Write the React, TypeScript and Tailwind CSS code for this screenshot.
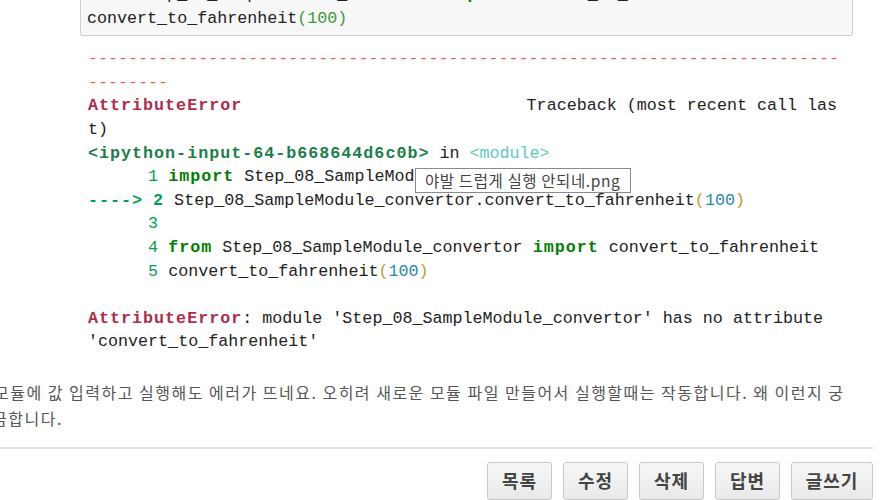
import React from "react";

const mono = "font-['Liberation_Mono','DejaVu_Sans_Mono',monospace] text-[16.7px] leading-[23.6px]";
const B = "font-bold tracking-[1px]";

export default function App() {
  return (
    <div className="w-[883px] h-[500px] overflow-hidden bg-white">
      {/* code cell */}
      <div
        className={`ml-[80px] w-[773px] -mt-[22px] pt-[4px] pb-[5px] px-[6px] border border-[#cfcfcf] rounded-[2px] bg-[#f7f7f7] text-[#222] whitespace-pre ${mono}`}
      >
        <div>
          <span className="text-[#008000] font-bold">from</span> Step_08_SampleModule_convertor{" "}
          <span className="text-[#008000] font-bold">import</span> convert_to_fahrenheit
        </div>
        <div>
          convert_to_fahrenheit<span className="text-[#3a9a3a]">(100)</span>
        </div>
      </div>

      {/* output */}
      <div className={`relative ml-[88px] mt-[11px] whitespace-pre text-[#222] ${mono}`}>
        <div className="text-[#e06060]">---------------------------------------------------------------------------</div>
        <div className="text-[#e06060]">--------</div>
        <div>
          <span className={`text-[#b22b4a] ${B}`}>AttributeError</span>
          {"                            "}
          <span className="inline-block w-[4px]" />
          {"Traceback (most recent call las"}
        </div>
        <div>t)</div>
        <div>
          <span className={`text-[#1a7f4a] ${B}`}>&lt;ipython-input-64-b668644d6c0b&gt;</span> in{" "}
          <span className="text-[#60c6c8]">&lt;module&gt;</span>
        </div>
        <div>
          <span className="text-[#00a250]">{"      1 "}</span>
          <span className={`text-[#008000] ${B}`}>import</span> Step_08_SampleModule_convertor
        </div>
        <div>
          <span className={`text-[#00a250] ${B}`}>{"---->"}</span>{" "}
          <span className={`text-[#00a250] ${B}`}>2</span> Step_08_SampleModule_convertor.convert_to_fahrenheit
          <span className="text-[#c99a2e]">(</span>
          <span className="text-[#1f8aa6]">100</span>
          <span className="text-[#c99a2e]">)</span>
        </div>
        <div>
          <span className="text-[#00a250]">{"      3"}</span>
        </div>
        <div>
          <span className="text-[#00a250]">{"      4 "}</span>
          <span className={`text-[#008000] ${B}`}>from</span> Step_08_SampleModule_convertor{" "}
          <span className={`text-[#008000] ${B}`}>import</span> convert_to_fahrenheit
        </div>
        <div>
          <span className="text-[#00a250]">{"      5 "}</span>convert_to_fahrenheit
          <span className="text-[#c99a2e]">(</span>
          <span className="text-[#1f8aa6]">100</span>
          <span className="text-[#c99a2e]">)</span>
        </div>
        <div>{" "}</div>
        <div>
          <span className={`text-[#b22b4a] ${B}`}>AttributeError</span>: module 'Step_08_SampleModule_convertor' has no attribute
        </div>
        <div>'convert_to_fahrenheit'</div>

        {/* tooltip */}
        <div className="absolute left-[327px] top-[121px] w-[216px] h-[25px] border border-[#8a8a8a] bg-white flex items-center pl-[9px] font-['Noto_Sans_CJK_KR','Noto_Sans',sans-serif] text-[15.5px] tracking-[0.6px] leading-none text-[#444] whitespace-nowrap">
          야발 드럽게 실행 안되네.png
        </div>
      </div>

      {/* paragraph */}
      <div className="mt-[25px] -ml-[6px] whitespace-nowrap font-['Noto_Sans_CJK_KR','Noto_Sans',sans-serif] text-[16px] tracking-[1.5px] leading-[26px] text-[#555]">
        <div>모듈에 값 입력하고 실행해도 에러가 뜨네요. 오히려 새로운 모듈 파일 만들어서 실행할때는 작동합니다. 왜 이런지 궁</div>
        <div className="-ml-[2px]">금합니다.</div>
      </div>

      {/* separator */}
      <div className="mt-[16px] w-[873px] border-t-2 border-[#e2e2e2]" />

      {/* buttons */}
      <div className="mt-[13px] w-[873px] flex justify-end gap-[11px]">
        {["목록", "수정", "삭제", "답변", "글쓰기"].map((t) => (
          <button
            key={t}
            className={`h-[38px] ${t === "글쓰기" ? "w-[82px]" : "w-[65px]"} rounded-[3px] border border-[#c8c8c8] bg-gradient-to-b from-[#f7f7f7] to-[#e9e9e9] font-['Noto_Sans_CJK_KR','Noto_Sans',sans-serif] text-[18px] tracking-[1px] font-bold text-[#444] flex items-center justify-center`}
          >
            {t}
          </button>
        ))}
      </div>
    </div>
  );
}
